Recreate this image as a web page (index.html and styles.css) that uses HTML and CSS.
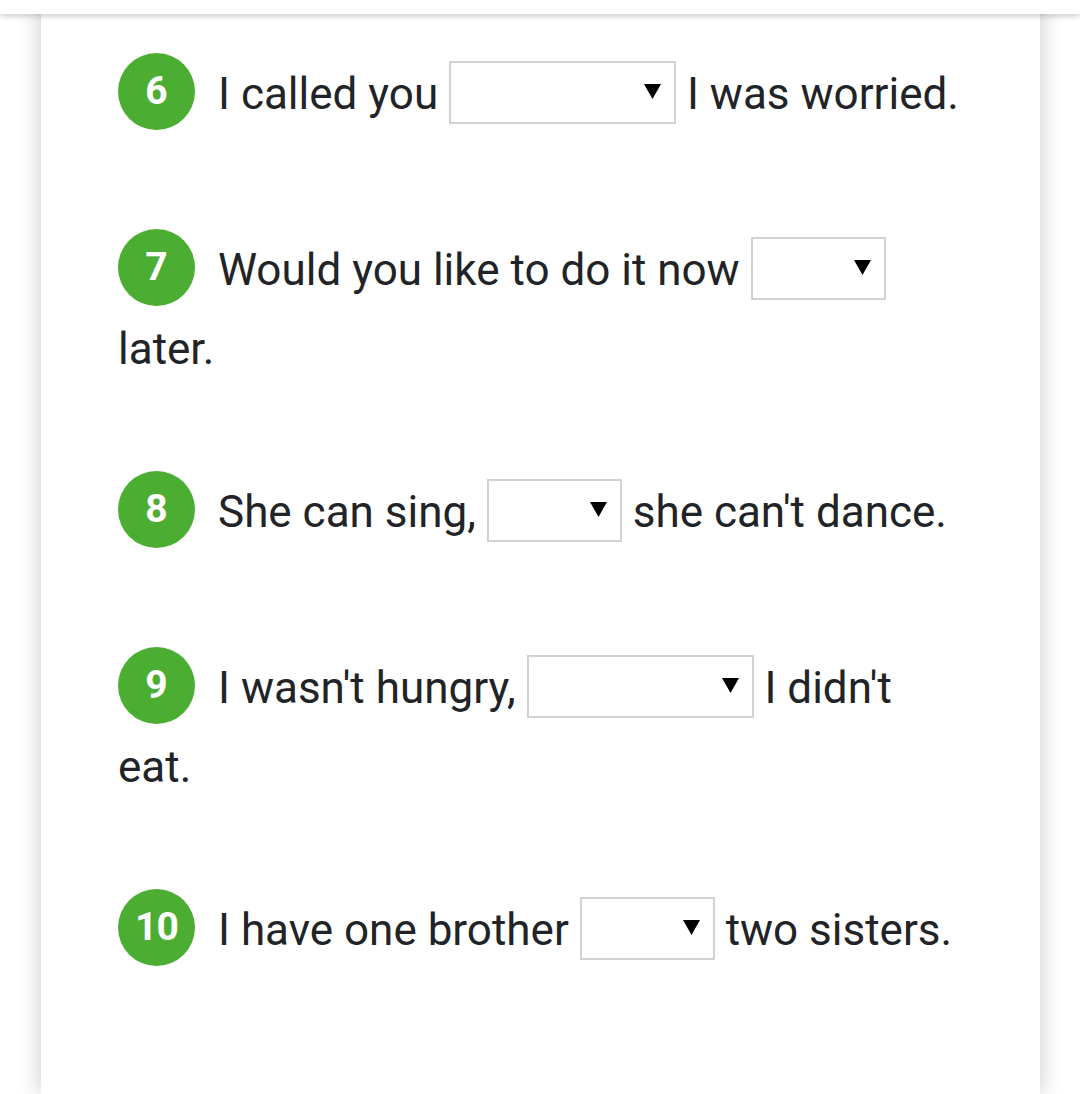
FILE: index.html
```html
<!DOCTYPE html>
<html>
<head>
<meta charset="utf-8">
<link rel="stylesheet" href="styles.css">
</head>
<body>
<div class="topbar"></div>
<main class="card">
  <p class="q"><span class="num">6</span><span class="t">I called you</span> <span class="sel wide"><svg class="arr" viewBox="0 0 17 15"><path d="M0 0H17L8.5 15Z"/></svg></span> I was worried.</p>
  <p class="q"><span class="num">7</span><span class="t">Would you like to do it now</span> <span class="sel"><svg class="arr" viewBox="0 0 17 15"><path d="M0 0H17L8.5 15Z"/></svg></span> later.</p>
  <p class="q"><span class="num">8</span><span class="t">She can sing,</span> <span class="sel"><svg class="arr" viewBox="0 0 17 15"><path d="M0 0H17L8.5 15Z"/></svg></span> she can't dance.</p>
  <p class="q"><span class="num">9</span><span class="t">I wasn't hungry,</span> <span class="sel wide"><svg class="arr" viewBox="0 0 17 15"><path d="M0 0H17L8.5 15Z"/></svg></span> I didn't eat.</p>
  <p class="q"><span class="num ten">10</span><span class="t">I have one brother</span> <span class="sel"><svg class="arr" viewBox="0 0 17 15"><path d="M0 0H17L8.5 15Z"/></svg></span> two sisters.</p>
</main>
</body>
</html>
```
FILE: styles.css
```css
html, body {
  margin: 0;
  padding: 0;
  background: #ffffff;
  height: 1094px;
  overflow: hidden;
}
body {
  font-family: Roboto, "Liberation Sans", sans-serif;
  color: #222326;
  position: relative;
}
.topbar {
  position: absolute;
  left: 0;
  top: 0;
  width: 100%;
  height: 14px;
  background: #ffffff;
  box-shadow: 0 2px 6px rgba(0, 0, 0, 0.22);
  z-index: 2;
}
.card {
  margin: 0 0 0 41px;
  width: 845px;
  padding: 54px 77px 0 77px;
  height: 1040px;
  background: #ffffff;
  box-shadow: 0 0 22px rgba(0, 0, 0, 0.22);
}
.q {
  margin: 0 0 90px 0;
  font-size: 44px;
  line-height: 66px;
}
.num {
  display: inline-block;
  width: 77px;
  height: 77px;
  margin: -1px 23px 10px 0;
  border-radius: 50%;
  background: #4bae33;
  color: #ffffff;
  font-weight: 700;
  font-size: 39px;
  line-height: 77px;
  text-align: center;
  vertical-align: middle;
}
.num.ten {
  letter-spacing: -1px;
}
.sel {
  display: inline-block;
  box-sizing: border-box;
  width: 135px;
  height: 63px;
  margin: 0 0 9px 0;
  border: 2px solid #d2d2d2;
  background: #fff;
  vertical-align: middle;
  position: relative;
}
.sel.wide {
  width: 227px;
}
.arr {
  position: absolute;
  right: 13px;
  top: 21px;
  width: 17px;
  height: 15px;
  fill: #000;
}
```
